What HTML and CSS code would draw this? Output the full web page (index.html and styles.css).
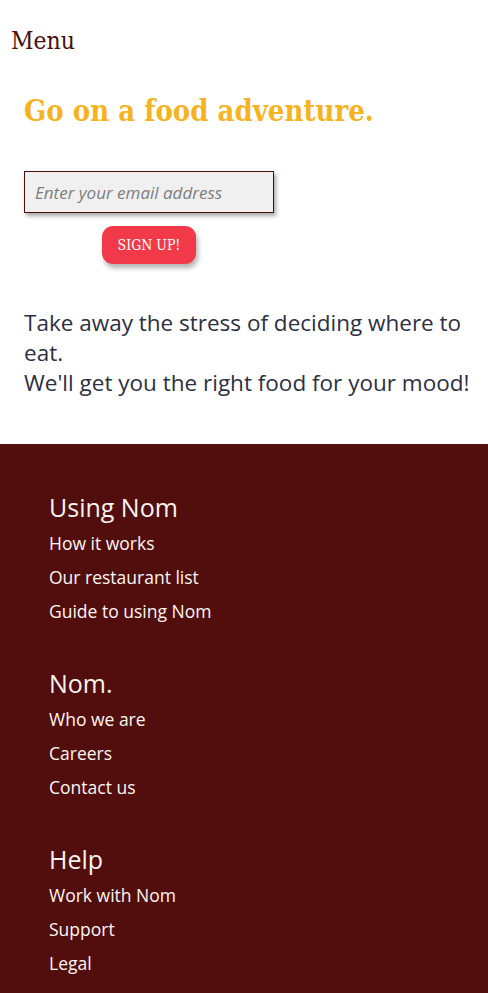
FILE: index.html
```html
<!DOCTYPE html>
<html>
<head>
<meta charset="utf-8">
<link rel="stylesheet" href="styles.css">
</head>
<body>
<header class="topbar">
  <span class="menu">Menu</span>
</header>
<main class="hero">
  <h1 class="title">Go on a food adventure.</h1>
  <form class="signup">
    <input class="email" type="email" placeholder="Enter your email address">
    <button class="btn" type="button">SIGN UP!</button>
  </form>
  <p class="pitch">Take away the stress of deciding where to eat.<br>We'll get you the right food for your mood!</p>
</main>
<footer class="footer">
  <section class="col">
    <h2 class="col-title">Using Nom</h2>
    <a class="link">How it works</a>
    <a class="link">Our restaurant list</a>
    <a class="link">Guide to using Nom</a>
  </section>
  <section class="col">
    <h2 class="col-title">Nom.</h2>
    <a class="link">Who we are</a>
    <a class="link">Careers</a>
    <a class="link">Contact us</a>
  </section>
  <section class="col">
    <h2 class="col-title">Help</h2>
    <a class="link">Work with Nom</a>
    <a class="link">Support</a>
    <a class="link">Legal</a>
  </section>
</footer>
</body>
</html>
```
FILE: styles.css
```css
* { box-sizing: border-box; }
body {
  margin: 0;
  font-family: "Open Sans", sans-serif;
  background: #fff;
}
.topbar {
  padding: 26px 11px 0;
  height: 56px;
}
.menu {
  font-family: "DejaVu Serif Condensed", "DejaVu Serif", serif;
  font-size: 24.5px;
  color: #4a0f0b;
  line-height: 30px;
}
.hero {
  padding: 33px 18px 0 24px;
}
.title {
  margin: 0;
  font-family: "DejaVu Serif Condensed", "DejaVu Serif", serif;
  font-weight: bold;
  font-size: 29px;
  line-height: 44px;
  color: #f4b31f;
}
.signup {
  margin-top: 38px;
  width: 250px;
  display: flex;
  flex-direction: column;
  align-items: center;
  gap: 13px;
}
.email {
  width: 250px;
  height: 42px;
  border: 1px solid #4a0f0b;
  background: #f0f0f0;
  box-shadow: 2px 3px 4px rgba(0,0,0,0.35);
  font-family: "Open Sans", sans-serif;
  font-style: italic;
  font-size: 17px;
  padding: 0 10px;
  outline: none;
}
.email::placeholder { color: #7d7d7d; }
.btn {
  width: 94px;
  height: 38px;
  border: none;
  border-radius: 11px;
  background: #f1394a;
  color: #fff;
  font-family: "DejaVu Serif Condensed", "DejaVu Serif", serif;
  font-size: 14px;
  box-shadow: 2px 4px 5px rgba(0,0,0,0.3);
  padding: 0;
}
.pitch {
  margin: 44px 0 0;
  font-size: 22.5px;
  line-height: 30px;
  color: #2d3040;
  padding-bottom: 46px;
}
.footer {
  background: #520e0c;
  padding: 44px 49px 14px;
  display: flex;
  flex-direction: column;
  gap: 36px;
}
.col {
  display: flex;
  flex-direction: column;
}
.col-title {
  margin: 0;
  font-weight: normal;
  font-size: 25px;
  line-height: 38px;
  color: #f7f3f0;
}
.link {
  font-size: 17.5px;
  line-height: 34px;
  color: #fbf6f2;
}
```
